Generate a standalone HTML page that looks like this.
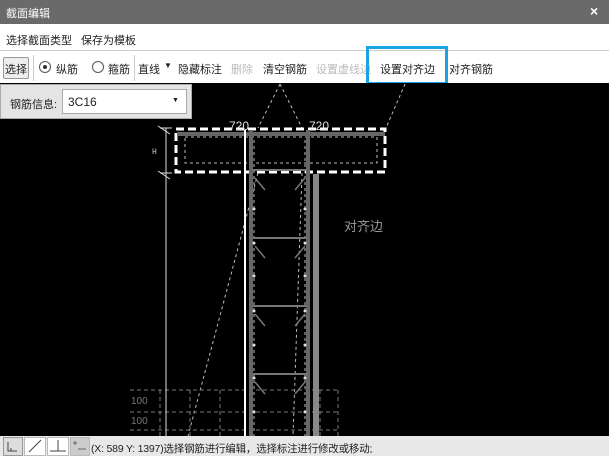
<!DOCTYPE html>
<html><head><meta charset="utf-8"><style>
*{margin:0;padding:0;box-sizing:border-box}
body{width:609px;height:456px;overflow:hidden;font-family:"Liberation Sans","Noto Sans CJK SC",sans-serif;font-size:11px;color:#222;background:#fff;position:relative}
.a{position:absolute;white-space:nowrap}
</style></head><body>
<div class="a" style="left:0;top:0;width:609px;height:24px;background:#6a6a6a"></div>
<div class="a" style="left:6px;top:5px;color:#fff;font-size:11px">截面编辑</div>
<div class="a" style="left:590px;top:3px;color:#fff;font-size:14px;font-weight:bold">×</div>
<div class="a" style="left:0;top:24px;width:609px;height:27px;background:#fff;border-bottom:1px solid #ccc"></div>
<div class="a" style="left:6px;top:32px">选择截面类型</div>
<div class="a" style="left:81px;top:32px">保存为模板</div>
<div class="a" style="left:0;top:52px;width:609px;height:31px;background:#fff"></div>
<div class="a" style="left:3px;top:57px;width:26px;height:22px;border:1px solid #999;border-radius:2px;background:#eee"></div>
<div class="a" style="left:5px;top:61px">选择</div>
<div class="a" style="left:33px;top:55px;width:1px;height:26px;background:#ccc"></div>
<div class="a" style="left:39px;top:61px;width:12px;height:12px;border:1px solid #555;border-radius:50%"></div>
<div class="a" style="left:43px;top:65px;width:4px;height:4px;background:#333;border-radius:50%"></div>
<div class="a" style="left:56px;top:61px">纵筋</div>
<div class="a" style="left:92px;top:61px;width:12px;height:12px;border:1px solid #555;border-radius:50%"></div>
<div class="a" style="left:108px;top:61px">箍筋</div>
<div class="a" style="left:134px;top:55px;width:1px;height:26px;background:#ccc"></div>
<div class="a" style="left:138px;top:61px">直线</div>
<div class="a" style="left:164px;top:61px;font-size:8px">▼</div>
<div class="a" style="left:178px;top:61px">隐藏标注</div>
<div class="a" style="left:231px;top:61px;color:#bbb">删除</div>
<div class="a" style="left:263px;top:61px">清空钢筋</div>
<div class="a" style="left:316px;top:61px;color:#bbb">设置虚线边</div>
<div class="a" style="left:366px;top:46px;width:82px;height:39px;border:3px solid #19a3e3"></div>
<div class="a" style="left:380px;top:61px">设置对齐边</div>
<div class="a" style="left:449px;top:61px">对齐钢筋</div>
<div class="a" style="left:0;top:83px;width:609px;height:353px;background:#000"></div>
<svg class="a" style="left:0;top:83px" width="609" height="353" viewBox="0 83 609 353">
<g fill="none" stroke="#bbb" stroke-width="1" stroke-dasharray="3,3">
<path d="M280 84L258 128M280 84L302 128M405 84L386 128M258 173L188 436M302 173L293 436"/>
<path d="M185 137H377V163H185Z"/>
<path d="M254 140V436M305 140V436"/>
</g>
<g fill="none" stroke="#777" stroke-dasharray="4,3">
<path d="M130 390H340M130 412H340M130 430H340M160 390V436M190 390V436M220 390V436M320 390V436M338 390V436"/>
</g>
<text x="131" y="404" fill="#777" font-size="10" font-family="Liberation Sans">100</text>
<text x="131" y="424" fill="#777" font-size="10" font-family="Liberation Sans">100</text>
<rect x="176" y="129" width="209" height="43" fill="none" stroke="#fff" stroke-width="3" stroke-dasharray="8,4"/>
<path d="M177 134H385" stroke="#666" stroke-width="4"/>
<path d="M166 128V436M158 126l12 8M158 171l12 8M160 128h12M160 173h12" stroke="#ddd" stroke-width="1"/>
<text x="152" y="154" fill="#ccc" font-size="8" font-family="Liberation Mono">H</text>
<path d="M245 130V436" stroke="#fff" stroke-width="2"/>
<path d="M251 130V436M308 130V436" stroke="#666" stroke-width="4"/>
<path d="M316 174V436" stroke="#888" stroke-width="6"/>
<path d="M253 170H307M253 238H307M253 306H307M253 374H307" stroke="#777" stroke-width="2"/>
<g stroke="#777" stroke-width="1.5"><path d="M255 178l10 12M305 178l-10 12M255 246l10 12M305 246l-10 12M255 314l10 12M305 314l-10 12M255 382l10 12M305 382l-10 12"/></g>
<g fill="#ddd"><circle cx="254" cy="209" r="1.5"/><circle cx="305" cy="209" r="1.5"/><circle cx="254" cy="243" r="1.5"/><circle cx="305" cy="243" r="1.5"/><circle cx="254" cy="276" r="1.5"/><circle cx="305" cy="276" r="1.5"/><circle cx="254" cy="311" r="1.5"/><circle cx="305" cy="311" r="1.5"/><circle cx="254" cy="345" r="1.5"/><circle cx="305" cy="345" r="1.5"/><circle cx="254" cy="378" r="1.5"/><circle cx="305" cy="378" r="1.5"/><circle cx="254" cy="412" r="1.5"/><circle cx="305" cy="412" r="1.5"/></g>
<text x="229" y="130" fill="#ddd" font-size="12" font-family="Liberation Sans">720</text>
<text x="309" y="130" fill="#ddd" font-size="12" font-family="Liberation Sans">720</text>
<text x="344" y="231" fill="#999" font-size="13" font-family="Liberation Sans,Noto Sans CJK SC">对齐边</text>
</svg>
<div class="a" style="left:0;top:84px;width:192px;height:35px;background:#e4e4e4;border:1px solid #aaa"></div>
<div class="a" style="left:10px;top:96px">钢筋信息:</div>
<div class="a" style="left:62px;top:89px;width:125px;height:25px;background:#fff;border:1px solid #aaa"></div>
<div class="a" style="left:68px;top:95px;font-size:12px">3C16</div>
<div class="a" style="left:172px;top:97px;font-size:7px">▼</div>
<div class="a" style="left:0;top:436px;width:609px;height:20px;background:#e8e8e8"></div>
<div class="a" style="left:3px;top:437px;width:20px;height:19px;border:1px solid #999;background:#ddd"></div>
<div class="a" style="left:24px;top:437px;width:22px;height:19px;border:1px solid #bbb;background:#fff"></div>
<div class="a" style="left:47px;top:437px;width:22px;height:19px;border:1px solid #bbb;background:#fff"></div>
<div class="a" style="left:70px;top:437px;width:20px;height:19px;border:1px solid #bbb;background:#ccc"></div>
<svg class="a" style="left:0;top:436px" width="92" height="20"><path d="M8 6V15H17M11 12V15" stroke="#444" fill="none"/><path d="M29 16L41 4" stroke="#444"/><path d="M58 4V15M50 15H66" stroke="#444"/><path d="M73 7h4M75 5v4M78 13h8" stroke="#666"/></svg>
<div class="a" style="left:91px;top:441px;font-size:10.5px;letter-spacing:-0.2px">(X: 589 Y: 1397)选择钢筋进行编辑，选择标注进行修改或移动;</div>
</body></html>
